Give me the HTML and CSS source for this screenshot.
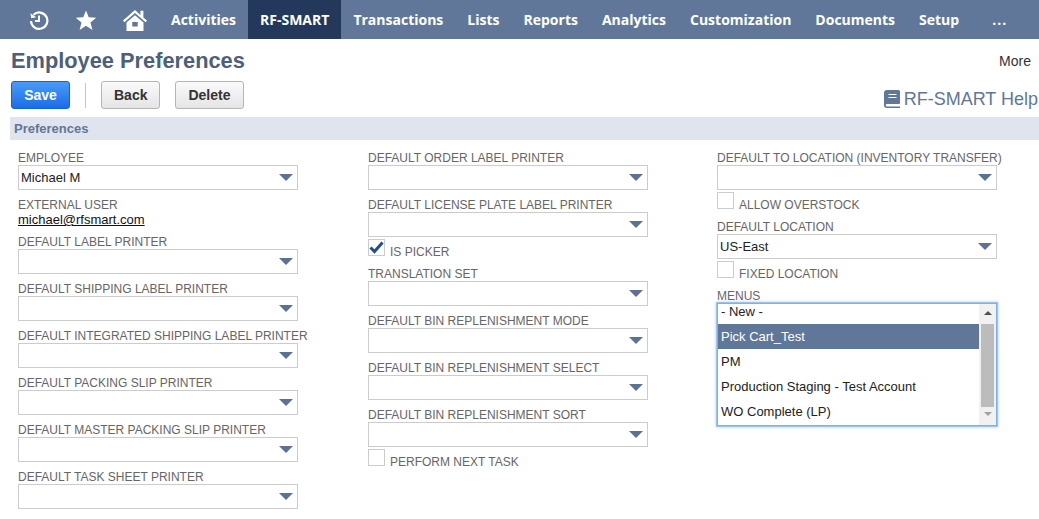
FILE: index.html
```html
<!DOCTYPE html>
<html lang="en">
<head>
  <meta charset="UTF-8" />
  <meta name="viewport" content="width=device-width, initial-scale=1.0" />
  <title>Employee Preferences</title>
  <link rel="stylesheet" href="styles.css">
</head>
<body>
  <nav class="topnav">
    <div class="nav-icons">
      <svg width="20" height="20" viewBox="0 0 22 22" fill="none" stroke="#fff" stroke-width="2.4">
        <path d="M5 5.2A9 9 0 1 1 2.2 12" />
        <path d="M1.5 3.5l1 5.5 5.5-1" fill="#fff" stroke="none" />
        <path d="M11 6v6H6.5" stroke-width="2.2" />
      </svg>
      <svg width="22" height="22" viewBox="0 0 24 24" fill="#fff">
        <path d="M12 1.5l3 7.6 8.2.5-6.3 5.2 2.1 8-7-4.4-7 4.4 2.1-8L.8 9.6 9 9.1z" />
      </svg>
      <svg width="24" height="24" viewBox="0 0 24 24" fill="#fff">
        <path d="M12 2L0 12.6l1.4 1.6L12 5l10.6 9.2 1.4-1.6-3.6-3.1V2.8h-3v4.1z" />
        <path d="M12 7.2L3.5 14.5V23h17v-8.5zM9.3 14h5.4v4.5H9.3z" fill-rule="evenodd" />
      </svg>
    </div>
    <a class="nav-item">Activities</a>
    <a class="nav-item active">RF-SMART</a>
    <a class="nav-item">Transactions</a>
    <a class="nav-item">Lists</a>
    <a class="nav-item">Reports</a>
    <a class="nav-item">Analytics</a>
    <a class="nav-item">Customization</a>
    <a class="nav-item">Documents</a>
    <a class="nav-item">Setup</a>
    <a class="nav-item nav-more">...</a>
  </nav>

  <div class="title-row">
    <h1>Employee Preferences</h1>
    <a class="more">More</a>
  </div>

  <div class="button-row">
    <button class="btn btn-save">Save</button>
    <span class="btn-sep"></span>
    <button class="btn">Back</button>
    <button class="btn">Delete</button>
    <a class="help">
      <svg width="16" height="18" viewBox="0 0 16 18" fill="#607799">
        <path d="M3 0h11.5a1.5 1.5 0 0 1 1.5 1.5V13a1 1 0 0 1-1 1H3a1.2 1.2 0 0 0 0 2.4h13V18H3a3 3 0 0 1-3-3V3a3 3 0 0 1 3-3z" />
        <path d="M4.5 4.5h8M4.5 7.5h8" stroke="#fff" stroke-width="1" />
      </svg>
      RF-SMART Help
    </a>
  </div>

  <div class="section-bar">Preferences</div>

  <div class="columns">
    <div class="column column-first">
      <div class="field"><label>EMPLOYEE</label><div class="select">Michael M</div></div>
      <div class="field"><label>EXTERNAL USER</label><a class="email">michael@rfsmart.com</a></div>
      <div class="field"><label>DEFAULT LABEL PRINTER</label><div class="select"></div></div>
      <div class="field"><label>DEFAULT SHIPPING LABEL PRINTER</label><div class="select"></div></div>
      <div class="field"><label>DEFAULT INTEGRATED SHIPPING LABEL PRINTER</label><div class="select"></div></div>
      <div class="field"><label>DEFAULT PACKING SLIP PRINTER</label><div class="select"></div></div>
      <div class="field"><label>DEFAULT MASTER PACKING SLIP PRINTER</label><div class="select"></div></div>
      <div class="field"><label>DEFAULT TASK SHEET PRINTER</label><div class="select"></div></div>
    </div>

    <div class="column">
      <div class="field"><label>DEFAULT ORDER LABEL PRINTER</label><div class="select"></div></div>
      <div class="field field-tight"><label>DEFAULT LICENSE PLATE LABEL PRINTER</label><div class="select"></div></div>
      <div class="check-row">
        <span class="checkbox">
          <svg width="15" height="13" viewBox="0 0 15 13" fill="none" stroke="#1f4f8f" stroke-width="3"><path d="M1.5 6.5l4 4 8-9" /></svg>
        </span>
        <span>IS PICKER</span>
      </div>
      <div class="field"><label>TRANSLATION SET</label><div class="select"></div></div>
      <div class="field"><label>DEFAULT BIN REPLENISHMENT MODE</label><div class="select"></div></div>
      <div class="field"><label>DEFAULT BIN REPLENISHMENT SELECT</label><div class="select"></div></div>
      <div class="field field-tight"><label>DEFAULT BIN REPLENISHMENT SORT</label><div class="select"></div></div>
      <div class="check-row"><span class="checkbox"></span><span>PERFORM NEXT TASK</span></div>
    </div>

    <div class="column">
      <div class="field field-tight"><label>DEFAULT TO LOCATION (INVENTORY TRANSFER)</label><div class="select"></div></div>
      <div class="check-row"><span class="checkbox"></span><span>ALLOW OVERSTOCK</span></div>
      <div class="field field-tight"><label>DEFAULT LOCATION</label><div class="select">US-East</div></div>
      <div class="check-row"><span class="checkbox"></span><span>FIXED LOCATION</span></div>
      <div class="field">
        <label>MENUS</label>
        <div class="listbox">
          <div class="list-rows">
            <div class="list-row list-row-first">- New -</div>
            <div class="list-row selected">Pick Cart_Test</div>
            <div class="list-row">PM</div>
            <div class="list-row">Production Staging - Test Account</div>
            <div class="list-row">WO Complete (LP)</div>
          </div>
          <div class="scrollbar">
            <span class="arrow-up"></span>
            <span class="thumb"></span>
            <span class="arrow-down"></span>
          </div>
        </div>
      </div>
    </div>
  </div>
</body>
</html>
```

FILE: styles.css
```css
html, body { height: 100%; }

body {
  margin: 0;
  overflow: hidden;
  background: #fff;
  font-family: "Liberation Sans", Arial, sans-serif;
  font-size: 14px;
  color: #222;
}

.topnav {
  display: flex;
  align-items: stretch;
  height: 39px;
  padding-left: 29px;
  background: #607799;
}

.nav-icons {
  display: flex;
  align-items: center;
  gap: 26px;
  width: 130px;
}

.nav-item {
  display: flex;
  align-items: center;
  padding: 0 12px;
  color: #fff;
  font-family: "Open Sans", sans-serif;
  font-size: 14px;
  font-weight: 700;
}

.nav-item.active { background: #24385b; }

.nav-more {
  margin-left: 9px;
  letter-spacing: 1px;
}

.title-row {
  display: flex;
  justify-content: space-between;
  align-items: center;
  height: 42px;
  padding: 2px 8px 0 11px;
  box-sizing: border-box;
}

h1 {
  margin: 0;
  font-size: 21.8px;
  font-weight: 700;
  color: #4d5f79;
}

.more { font-size: 14px; color: #333; }

.button-row {
  display: flex;
  align-items: center;
  height: 28px;
  padding: 0 1px 0 11px;
}

.btn {
  height: 28px;
  padding: 0 12px;
  margin-right: 15px;
  border: 1px solid #b5b5b5;
  border-radius: 3px;
  background: linear-gradient(#fafafa, #e5e5e5);
  font-family: "Liberation Sans", Arial, sans-serif;
  font-size: 14px;
  font-weight: 700;
  color: #333;
}

.btn-save {
  width: 59px;
  padding: 0;
  border-color: #1465c8;
  background: linear-gradient(#4a9bf8, #1a6de8);
  color: #fff;
}

.btn-sep {
  width: 1px;
  height: 25px;
  margin-right: 15px;
  background: #c4c4c4;
}

.help {
  display: flex;
  align-items: center;
  gap: 4px;
  margin: 8px 0 0 auto;
  font-size: 18px;
  color: #607799;
}

.section-bar {
  height: 23px;
  margin: 8px 0 10px 10px;
  padding-left: 4px;
  background: #dfe4ee;
  font-size: 13px;
  font-weight: 700;
  line-height: 23px;
  color: #607799;
}

.columns {
  display: flex;
  padding-left: 18px;
}

.column {
  flex: none;
  width: 349px;
}

.column-first { width: 350px; }

.field { margin-bottom: 7px; }
.field-tight { margin-bottom: 2px; }

label {
  display: block;
  height: 15px;
  font-size: 12px;
  line-height: 17px;
  color: #666;
  white-space: nowrap;
}

.select {
  display: flex;
  justify-content: space-between;
  align-items: center;
  box-sizing: border-box;
  width: 280px;
  height: 25px;
  padding: 0 4px 0 2px;
  border: 1px solid #ccc;
  font-size: 13px;
  color: #222;
}

.select::after {
  content: "";
  margin-left: auto;
  border-style: solid;
  border-width: 7px 7px 0;
  border-color: #5b7295 transparent transparent;
}

.email {
  display: block;
  height: 15px;
  font-size: 13px;
  line-height: 15px;
  text-decoration: underline;
  color: #111;
}

.check-row {
  display: flex;
  align-items: flex-end;
  gap: 5px;
  height: 20px;
  margin-bottom: 7px;
  font-size: 12px;
  line-height: 14px;
  color: #666;
}

.checkbox {
  display: flex;
  align-items: center;
  justify-content: center;
  box-sizing: border-box;
  width: 17px;
  height: 17px;
  margin-bottom: 3px;
  border: 1px solid #ccc;
}

.listbox {
  display: flex;
  box-sizing: border-box;
  width: 280px;
  height: 123px;
  border: 1px solid #7eb2e6;
  box-shadow: 0 0 0 1px #9cc4ec, 0 0 3px 1px #a9cdf0;
}

.list-rows {
  flex: 1;
  overflow: hidden;
}

.list-row {
  height: 25px;
  padding-left: 3px;
  font-size: 13px;
  line-height: 25px;
  color: #222;
}

.list-row-first {
  height: 20px;
  line-height: 15px;
}

.list-row.selected {
  background: #607799;
  color: #fff;
}

.scrollbar {
  display: flex;
  flex-direction: column;
  align-items: center;
  width: 17px;
  background: #f1f1f1;
}

.arrow-up, .arrow-down {
  flex: none;
  border-style: solid;
  border-color: transparent;
}

.arrow-up {
  margin: 7px 0 9px;
  border-width: 0 4px 4px;
  border-bottom-color: #505050;
}

.arrow-down {
  margin: 5px 0 0;
  border-width: 4px 4px 0;
  border-top-color: #a3a3a3;
}

.thumb {
  flex: none;
  width: 13px;
  height: 83px;
  background: #bcbcbc;
}
```
